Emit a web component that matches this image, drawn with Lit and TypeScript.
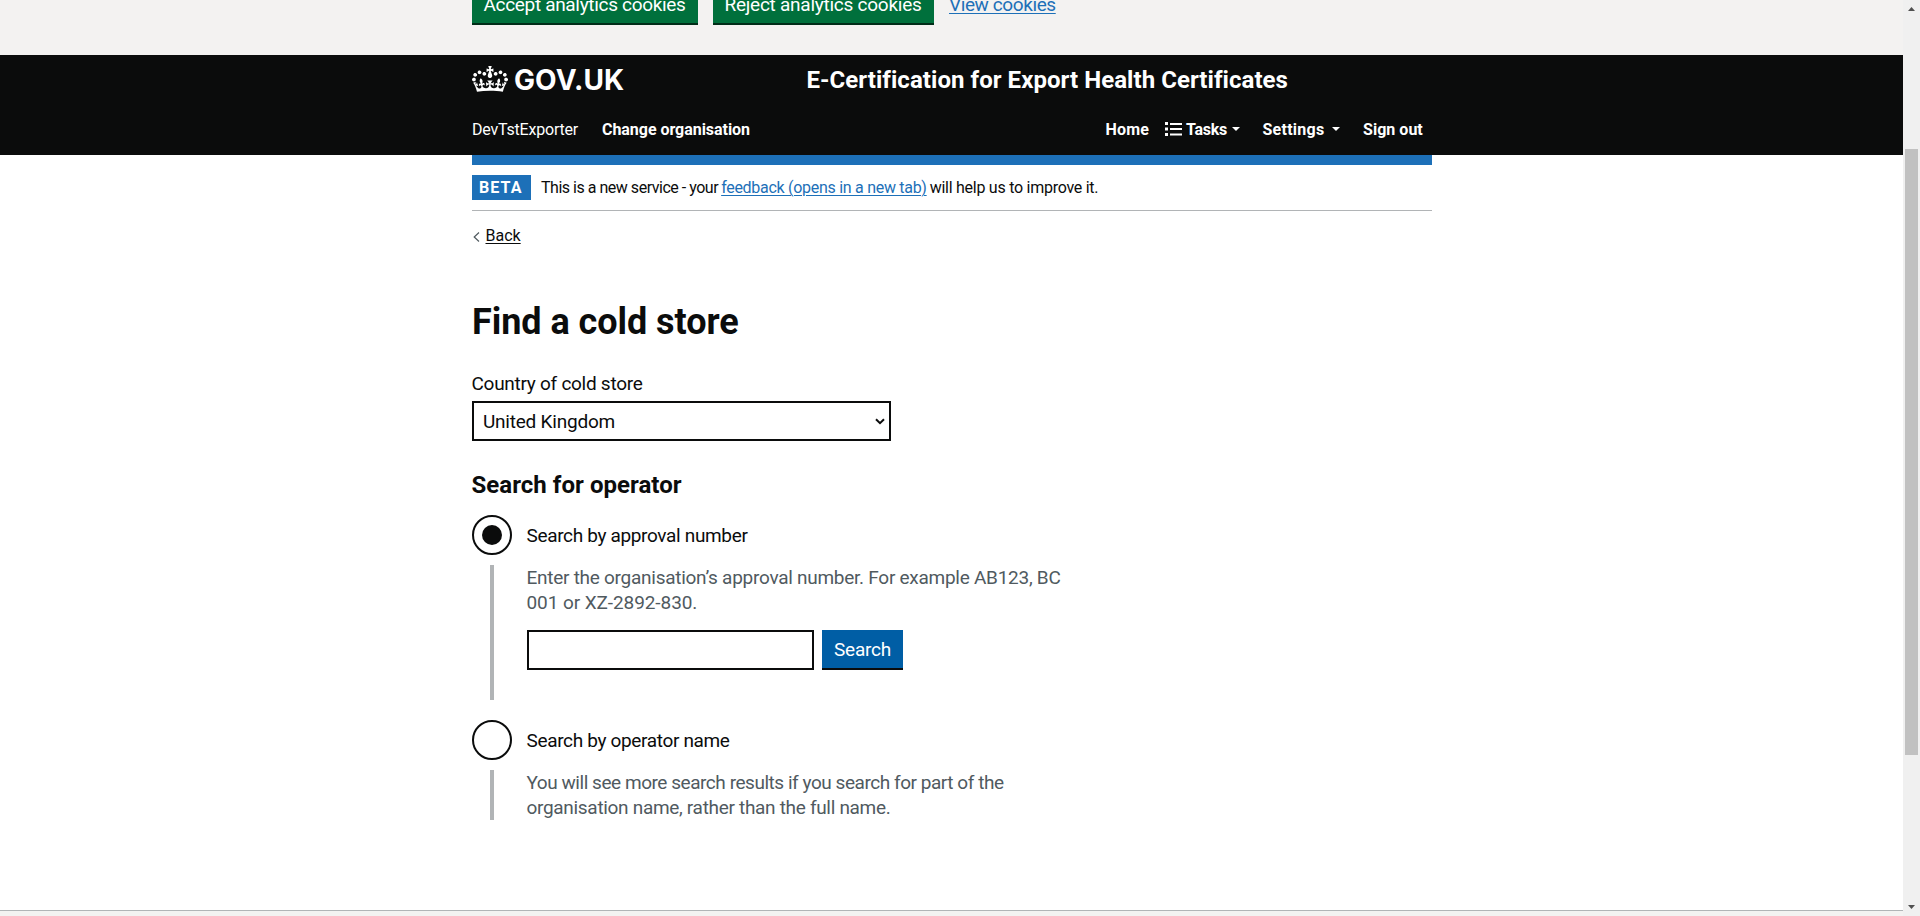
import { LitElement, html, css, svg } from 'lit';
import { customElement, property, state } from 'lit/decorators.js';

const crown = svg`<path fill="currentColor" fill-rule="evenodd" d="M25 30.2c3.5 1.5 7.7-.2 9.1-3.7 1.5-3.6-.2-7.8-3.9-9.2-3.6-1.4-7.6.3-9.1 3.9-1.4 3.5.3 7.5 3.9 9zM9 39.5c3.6 1.5 7.8-.2 9.2-3.7 1.5-3.6-.2-7.8-3.9-9.1-3.6-1.5-7.6.2-9.1 3.8-1.4 3.5.3 7.5 3.8 9zM4.4 57.2c3.5 1.5 7.7-.2 9.1-3.8 1.5-3.6-.2-7.7-3.9-9.1-3.5-1.5-7.6.3-9.1 3.8-1.4 3.5.3 7.6 3.9 9.1zm38.3-21.4c3.5 1.5 7.7-.2 9.1-3.8 1.5-3.6-.2-7.7-3.9-9.1-3.6-1.5-7.6.3-9.1 3.8-1.3 3.6.4 7.7 3.9 9.1zm64.4-5.6c-3.6 1.5-7.8-.2-9.1-3.7-1.5-3.6.2-7.8 3.8-9.2 3.6-1.4 7.7.3 9.2 3.9 1.3 3.5-.4 7.5-3.9 9zm15.9 9.3c-3.6 1.5-7.7-.2-9.1-3.7-1.5-3.6.2-7.8 3.7-9.1 3.6-1.5 7.7.2 9.2 3.8 1.5 3.5-.3 7.5-3.8 9zm4.7 17.7c-3.6 1.5-7.8-.2-9.2-3.8-1.5-3.6.2-7.7 3.9-9.1 3.6-1.5 7.7.3 9.2 3.8 1.3 3.5-.4 7.6-3.9 9.1zM89.3 35.8c-3.6 1.5-7.8-.2-9.2-3.8-1.4-3.6.2-7.7 3.9-9.1 3.6-1.5 7.7.3 9.2 3.8 1.4 3.6-.3 7.7-3.9 9.1zM69.7 17.7l8.9 4.7V9.3l-8.9 2.8c-.2-.3-.5-.6-.9-.9L72.4 0H59.6l3.5 11.2c-.3.3-.6.5-.9.9l-8.8-2.8v13.1l8.8-4.7c.3.3.6.7.9.9l-5 15.4v.1c-.2.8-.4 1.6-.4 2.4 0 4.1 3.1 7.5 7 8.1h.2c.3 0 .7.1 1 .1.4 0 .7 0 1-.1h.2c4-.6 7.1-4.1 7.1-8.1 0-.8-.1-1.7-.4-2.4V34l-5.1-15.4c.4-.2.7-.6 1-.9zM66 92.8c16.9 0 32.8 1.1 47.1 3.2 4-16.9 8.9-26.7 14-33.5l-9.6-3.4c1 4.9 1.1 7.2 0 10.2-1.5-1.4-3-4.3-4.2-8.7L108.6 76c2.8-2 5-3.2 7.5-3.3-4.4 9.4-10 11.9-13.6 11.2-4.3-.8-6.3-4.6-5.6-7.9 1-4.7 5.7-5.9 8-.5 4.3-8.7-3-11.4-7.6-8.8 7.1-7.2 7.9-13.5 2.1-21.1-8 6.1-8.1 12.3-4.5 20.8-4.7-5.4-12.1-2.5-9.5 6.2 3.4-5.2 7.9-2 7.2 3.1-.6 4.3-6.4 7.8-13.5 7.2-10.3-.9-10.9-8-11.2-13.8 2.5-.5 7.1 1.8 11 7.3L80.2 60c-4.1 4.4-8 5.3-12.3 5.4 1.4-4.4 8-11.6 8-11.6H55.5s6.4 7.2 7.9 11.6c-4.2-.1-8-1-12.3-5.4l1.4 16.4c3.9-5.5 8.5-7.7 10.9-7.3-.3 5.8-.9 12.8-11.1 13.8-7.2.6-12.9-2.9-13.5-7.2-.7-5 3.8-8.3 7.1-3.1 2.7-8.7-4.6-11.6-9.4-6.2 3.7-8.5 3.6-14.7-4.6-20.8-5.8 7.6-5 13.9 2.2 21.1-4.7-2.6-11.9.1-7.7 8.8 2.3-5.5 7.1-4.2 8.1.5.7 3.3-1.3 7.1-5.7 7.9-3.5.7-9-1.8-13.5-11.2 2.5.1 4.7 1.3 7.5 3.3l-4.7-15.4c-1.2 4.4-2.7 7.2-4.3 8.7-1.1-3-.9-5.3 0-10.2l-9.5 3.4c5 6.9 9.9 16.7 14 33.5 14.8-2.1 30.8-3.2 47.7-3.2z"/>`;

const font = css`
  :host { display: block; font-family: Roboto, "Liberation Sans", sans-serif; color: #0b0c0c; }
  * { box-sizing: border-box; }
  h1, h2, p { margin: 0; }
`;

@customElement('cookie-banner')
class CookieBanner extends LitElement {
  static styles = [font, css`
    .banner { height: 55px; padding: 0 0 30px 472px; background: #f3f2f1; display: flex; align-items: flex-end; overflow: hidden; }
    .btn { flex: none; height: 40px; border: 0; border-bottom: 2px solid #002d18; background: #00703c; color: #fff; font-size: 19px; line-height: 19px; padding: 10px 0 9px 11.5px; margin-right: 15px; white-space: nowrap; }
    .accept { width: 226px; letter-spacing: -.325px; }
    .reject { width: 221px; letter-spacing: -.254px; }
    .view { font-size: 19px; line-height: 19px; letter-spacing: -.4px; color: #1d70b8; text-decoration: underline; text-decoration-thickness: 1px; text-underline-offset: 2px; padding-bottom: 11px; }
  `];
  render() {
    return html`<div class="banner">
      <div class="btn accept">Accept analytics cookies</div>
      <div class="btn reject">Reject analytics cookies</div>
      <a class="view">View cookies</a>
    </div>`;
  }
}

@customElement('site-header')
class SiteHeader extends LitElement {
  static styles = [font, css`
    .header { background: #0b0c0c; color: #fff; height: 100px; padding-left: 472px; font-weight: 700; white-space: nowrap; }
    .top { display: flex; height: 52px; }
    .crown { width: 36px; height: 26px; margin-top: 11px; }
    .logo { width: 293px; margin-left: 6px; padding-top: 8px; font-family: Inter, Roboto, sans-serif; font-size: 28px; line-height: 34px; letter-spacing: .1px; }
    .service { padding-top: 10px; font-size: 24px; line-height: 30px; letter-spacing: .05px; margin-left: -.5px; }
    .nav { display: flex; padding-top: 13px; font-size: 16px; line-height: 20px; }
    .user { width: 130px; font-weight: 400; letter-spacing: -.2px; }
    .org { width: 503.5px; letter-spacing: -.04px; }
    .home { width: 59px; letter-spacing: .17px; }
    .list { width: 17px; height: 14px; margin: 2px 4.5px 0 0; }
    .tasks { width: 45.5px; letter-spacing: -.26px; }
    .caret { width: 8px; height: 4px; margin-top: 7px; }
    .settings { width: 69px; margin-left: 23px; letter-spacing: .26px; }
    .out { margin-left: 23.5px; letter-spacing: .03px; }
    .bar { height: 10px; width: 960px; margin-left: 472px; background: #1d70b8; }
  `];
  render() {
    const caret = html`<svg class="caret" viewBox="0 0 8 4"><path d="M0 0h8L4 4z" fill="#fff"/></svg>`;
    return html`<div class="header">
      <div class="top">
        <svg class="crown" viewBox="0 0 132 97" preserveAspectRatio="none">${crown}</svg>
        <span class="logo">GOV.UK</span>
        <span class="service">E-Certification for Export Health Certificates</span>
      </div>
      <div class="nav">
        <span class="user">DevTstExporter</span>
        <span class="org">Change organisation</span>
        <span class="home">Home</span>
        <svg class="list" viewBox="0 0 17 14" fill="#fff"><path d="M0 0h3v3H0zM0 5.5h3v3H0zM0 11h3v3H0zM5 1h12v2H5zM5 6h12v2H5zM5 11.5h12v2H5z"/></svg>
        <span class="tasks">Tasks</span>${caret}
        <span class="settings">Settings</span>${caret}
        <span class="out">Sign out</span>
      </div>
    </div><div class="bar"></div>`;
  }
}

@customElement('phase-banner')
class PhaseBanner extends LitElement {
  static styles = [font, css`
    .phase { display: flex; width: 960px; height: 46px; padding-top: 10px; border-bottom: 1px solid #b1b4b6; font-size: 16px; line-height: 20px; white-space: nowrap; }
    .tag { width: 59px; height: 25px; padding: 3px 0 0 7px; margin-right: 10px; background: #1d70b8; color: #fff; font-weight: 700; letter-spacing: 1.1px; }
    .text { padding-top: 3px; }
    .a { letter-spacing: -.48px; }
    .b { letter-spacing: -.26px; }
    .link { color: #1d70b8; text-decoration: underline; text-decoration-thickness: 1px; text-underline-offset: 2px; letter-spacing: -.286px; margin: 0 3px; }
    .back { display: flex; margin-top: 15px; font-size: 16px; line-height: 20px; }
    .chev { width: 7px; height: 10px; margin: 6px 5.5px 0 1px; }
    .backlink { text-decoration: underline; text-decoration-thickness: 1px; text-underline-offset: 2px; }
  `];
  render() {
    return html`<div class="phase">
      <span class="tag">BETA</span>
      <span class="text"><span class="a">This is a new service - your</span><a class="link">feedback (opens in a new tab)</a><span class="b">will help us to improve it.</span></span>
    </div>
    <div class="back">
      <svg class="chev" viewBox="0 0 7 10" fill="none" stroke="#505a5f" stroke-width="1.2"><path d="M6 .5L1.2 5 6 9.5"/></svg>
      <a class="backlink">Back</a>
    </div>`;
  }
}

@customElement('radio-option')
class RadioOption extends LitElement {
  static styles = [font, css`
    .row { display: flex; gap: 14.5px; height: 40px; font-size: 19px; line-height: 25px; letter-spacing: -.34px; }
    .row span { padding-top: 8px; }
    .circle { width: 40px; height: 40px; border: 2px solid #0b0c0c; border-radius: 50%; display: grid; place-items: center; }
    .dot { width: 20px; height: 20px; border-radius: 50%; background: #0b0c0c; }
    .detail { margin: 10px 0 0 18px; border-left: 4px solid #b1b4b6; padding-left: 33px; }
  `];
  @property() label = '';
  @property({ type: Boolean }) checked = false;
  render() {
    return html`<div class="row"><div class="circle">${this.checked ? html`<div class="dot"></div>` : ''}</div><span>${this.label}</span></div>
      <div class="detail"><slot></slot></div>`;
  }
}

@customElement('cold-store-form')
class ColdStoreForm extends LitElement {
  static styles = [font, css`
    .form { font-size: 19px; line-height: 25px; white-space: nowrap; }
    h1 { margin-top: 56px; font-size: 36px; line-height: 40px; letter-spacing: -.05px; }
    .label { margin-top: 29px; margin-left: -.5px; letter-spacing: -.27px; }
    .select { display: flex; justify-content: space-between; width: 419px; height: 40px; margin-top: 5px; padding: 6px 4px 0 9px; border: 2px solid #0b0c0c; letter-spacing: -.22px; }
    .arrow { width: 10px; height: 7px; margin-top: 9px; }
    h2 { margin: 29px 0 15px -.5px; font-size: 24px; line-height: 30px; letter-spacing: .04px; }
    .first { height: 185px; margin-bottom: 20px; }
    .body1 { height: 135px; }
    .body2 { height: 50px; }
    .hint { color: #505a5f; margin-left: -.5px; }
    .h1 { letter-spacing: -.267px; }
    .h2 { letter-spacing: -.08px; }
    .h3 { letter-spacing: -.455px; }
    .h4 { letter-spacing: -.31px; }
    .search { display: flex; gap: 8px; margin-top: 15px; }
    .input { width: 287px; height: 40px; border: 2px solid #0b0c0c; }
    .btn { width: 81px; height: 40px; padding: 7px 0 0 12px; border-bottom: 2px solid #0b0c0c; background: #005ea5; color: #fff; letter-spacing: -.23px; }
  `];
  @state() private operatorMode = 'approval';
  render() {
    return html`<div class="form">
      <h1>Find a cold store</h1>
      <div class="label">Country of cold store</div>
      <div class="select">United Kingdom<svg class="arrow" viewBox="0 0 10 7" fill="none" stroke="#0b0c0c" stroke-width="2"><path d="M1 1.2l4 4 4-4"/></svg></div>
      <h2>Search for operator</h2>
      <radio-option class="first" label="Search by approval number" ?checked=${this.operatorMode === 'approval'}>
        <div class="body1">
          <div class="hint h1">Enter the organisation’s approval number. For example AB123, BC</div>
          <div class="hint h2">001 or XZ-2892-830.</div>
          <div class="search"><div class="input"></div><div class="btn">Search</div></div>
        </div>
      </radio-option>
      <radio-option label="Search by operator name" ?checked=${this.operatorMode === 'name'}>
        <div class="body2">
          <div class="hint h3">You will see more search results if you search for part of the</div>
          <div class="hint h4">organisation name, rather than the full name.</div>
        </div>
      </radio-option>
    </div>`;
  }
}

@customElement('app-root')
class AppRoot extends LitElement {
  static styles = [font, css`
    .window { display: flex; width: 1920px; height: 916px; background: #fff; overflow: hidden; }
    .page { width: 1903px; display: flex; flex-direction: column; }
    .main { flex: 1; padding-left: 472px; }
    .footer { height: 6px; background: #f3f2f1; border-top: 1px solid #b1b4b6; }
    .scroll { width: 17px; background: #f0f0f0; padding: 7px 2px 7px; display: flex; flex-direction: column; align-items: center; }
    .tri { width: 7px; height: 4px; }
    .thumb { width: 13px; height: 606px; margin: 138px 0 auto; background: #c1c1c1; }
  `];
  render() {
    return html`<div class="window">
      <div class="page">
        <cookie-banner></cookie-banner>
        <site-header></site-header>
        <div class="main"><phase-banner></phase-banner><cold-store-form></cold-store-form></div>
        <div class="footer"></div>
      </div>
      <div class="scroll">
        <svg class="tri" viewBox="0 0 7 4"><path d="M0 4h7L3.5 0z" fill="#505050"/></svg>
        <div class="thumb"></div>
        <svg class="tri" viewBox="0 0 7 4"><path d="M0 0h7L3.5 4z" fill="#505050"/></svg>
      </div>
    </div>`;
  }
}
